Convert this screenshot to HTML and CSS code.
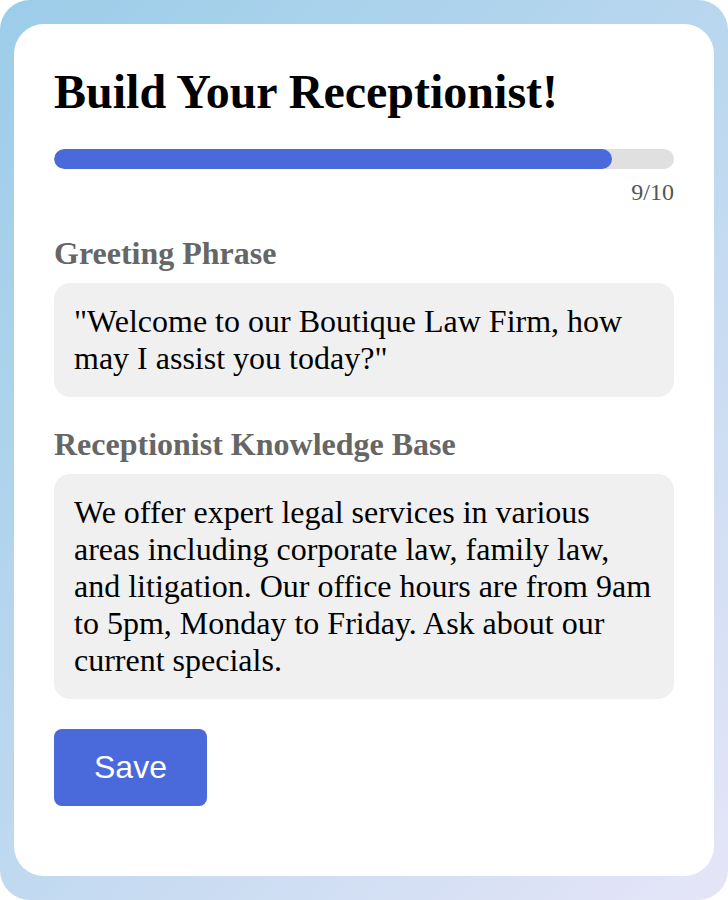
FILE: index.html
```html
<!DOCTYPE html>
<html lang="en">
<head>
    <meta charset="UTF-8">
    <meta name="viewport" content="width=device-width, initial-scale=1.0">
    <title>Build Your Receptionist</title>
    <link rel="stylesheet" href="styles.css">
</head>
<body>
    <div id="wrapper">
        <div id="card">
            <h1 id="title">Build Your Receptionist!</h1>

            <div class="progress">
                <div class="progress-fill" style="width: 90%;"></div>
            </div>
            <div id="stepCount">9/10</div>

            <div class="field-label">Greeting Phrase</div>
            <div class="field-box">"Welcome to our Boutique Law Firm, how may I assist you today?"</div>

            <div class="field-label">Receptionist Knowledge Base</div>
            <div class="field-box">We offer expert legal services in various areas including corporate law, family law, and litigation. Our office hours are from 9am to 5pm, Monday to Friday. Ask about our current specials.</div>

            <button id="saveBtn">Save</button>
        </div>
    </div>
</body>
</html>
```

FILE: styles.css
```css
html, body {
    margin: 0;
    padding: 0;
    background-color: white;
}

body {
    font-family: 'Liberation Serif', 'Times New Roman', serif;
}

#wrapper {
    box-sizing: border-box;
    min-height: 100vh;
    padding: 24px 14px;
    border-radius: 30px;
    background: linear-gradient(135deg, #9ccde9 0%, #bcd8ef 50%, #e6e5f8 100%);
    display: flex;
    flex-direction: column;
}

#card {
    flex: 1;
    background-color: white;
    border-radius: 30px;
    padding: 40px;
}

#title {
    font-size: 48px;
    font-weight: bold;
    color: black;
    margin: 0 0 30px 0;
}

.progress {
    height: 20px;
    border-radius: 10px;
    background-color: #e0e0e0;
    overflow: hidden;
}

.progress-fill {
    height: 100%;
    border-radius: 10px;
    background-color: #4a69da;
}

#stepCount {
    margin-top: 10px;
    text-align: right;
    font-size: 24px;
    color: #555;
}

.field-label {
    margin: 29px 0 11px 0;
    font-size: 32px;
    font-weight: bold;
    color: #666;
}

.field-box {
    background-color: #f0f0f0;
    border-radius: 16px;
    padding: 20px;
    font-size: 32px;
    color: black;
}

#saveBtn {
    margin-top: 30px;
    padding: 20px 40px;
    border: none;
    border-radius: 8px;
    background-color: #4a69da;
    color: white;
    font-family: 'Liberation Sans', Arial, sans-serif;
    font-size: 32px;
    cursor: pointer;
}
```
